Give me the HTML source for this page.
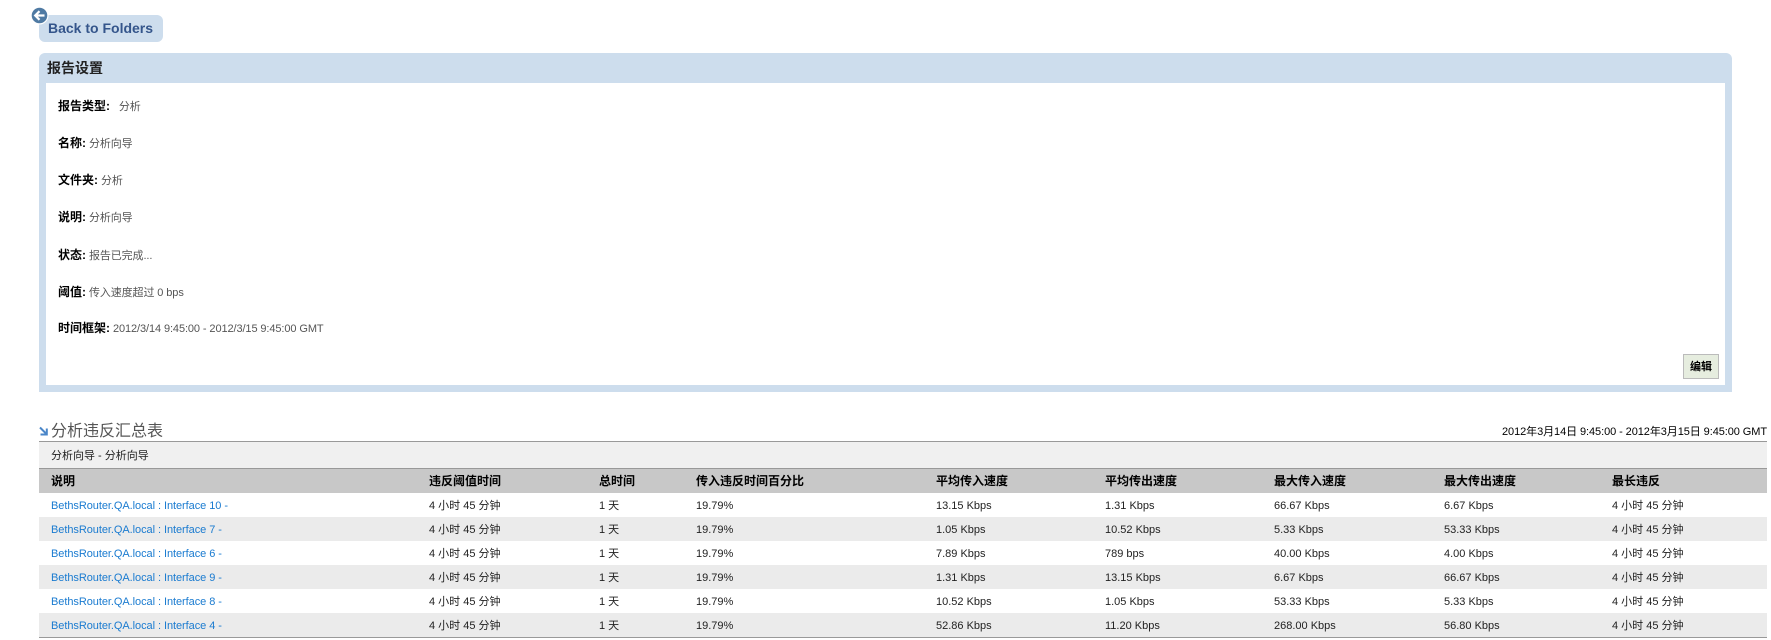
<!DOCTYPE html>
<html lang="zh"><head><meta charset="utf-8"><title>分析违反汇总表</title>
<style>
html,body{margin:0;padding:0;width:1771px;height:640px;overflow:hidden}
html{background:#fff}
body{position:relative;font-family:"Liberation Sans","WenQuanYi Zen Hei","Noto Sans CJK SC",sans-serif;font-size:11px;color:#555}
.a{position:absolute;white-space:nowrap}
.back{left:39px;top:15px;width:124px;height:27px;background:#cddded;border-radius:6px;color:#34558b;font-weight:bold;font-size:14px;line-height:27px;text-indent:9px}
.panel{left:39px;top:53px;width:1693px;height:339px;background:#cddded;border-radius:6px 6px 0 0}
.panel h2{position:absolute;left:8px;top:0;margin:0;font-size:14px;line-height:30px;color:#222;font-weight:bold}
.inner{position:absolute;left:7px;top:30px;width:1679px;height:302px;background:#fff}
.l{left:58px;line-height:14px;height:14px;letter-spacing:-.1px}
.l b{color:#000;font-size:12px;letter-spacing:0}
.edit{left:1683px;top:354px;width:34px;height:23px;background:#e6eddf;border:1px solid #bbb;color:#000;font-weight:bold;font-size:11px;line-height:24px;text-align:center}
.title{left:51px;top:422px;font-size:16px;line-height:20px;color:#555}
.range{right:4px;top:425px;color:#000;font-size:11px;line-height:14px;letter-spacing:-.08px}
table{position:absolute;left:39px;top:441px;width:1728px;border-collapse:collapse;table-layout:fixed;border-bottom:1px solid #999;border-top:1px solid #999;color:#222;font-size:11px}
td,th{padding:0 0 0 12px;text-align:left;white-space:nowrap;overflow:hidden;line-height:14px}
tr.s td{background:#f0f0f0;height:25px;padding-top:1px;border-bottom:1px solid #999;color:#222}
th{background:#c8c8c8;height:24px;color:#000;font-weight:bold;font-size:12px}
tbody td{height:23px;padding-top:1px}
tr.e td{background:#ebebeb}
a{color:#1a7bd0;text-decoration:none;letter-spacing:-.06px}
</style></head><body>
<div class="a back">Back to Folders</div>
<svg class="a" style="left:30px;top:6px" width="19" height="19" viewBox="0 0 19 19"><circle cx="9.5" cy="9.5" r="9" fill="#fff"/><circle cx="9.5" cy="9.5" r="7.8" fill="#4f7aa3"/><path d="M14.5 9.5H5.5M9.5 5.2L5.2 9.5L9.5 13.8" fill="none" stroke="#fff" stroke-width="2.2"/></svg>
<div class="a panel"><h2>报告设置</h2><div class="inner"></div></div>
<div class="a l" style="top:99px"><b>报告类型:</b>&nbsp;&nbsp; 分析</div>
<div class="a l" style="top:136px"><b>名称:</b> 分析向导</div>
<div class="a l" style="top:173px"><b>文件夹:</b> 分析</div>
<div class="a l" style="top:210px"><b>说明:</b> 分析向导</div>
<div class="a l" style="top:248px"><b>状态:</b> 报告已完成...</div>
<div class="a l" style="top:285px"><b>阈值:</b> 传入速度超过 0 bps</div>
<div class="a l" style="top:321px"><b>时间框架:</b> 2012/3/14 9:45:00 - 2012/3/15 9:45:00 GMT</div>
<div class="a edit">编辑</div>
<svg class="a" style="left:39px;top:426px" width="9" height="10" viewBox="0 0 9 10"><path d="M1 1.5L7 7.5M7.8 2.5V8.5H1.5" fill="none" stroke="#4a86c8" stroke-width="2"/></svg>
<div class="a title">分析违反汇总表</div>
<div class="a range">2012年3月14日 9:45:00 - 2012年3月15日 9:45:00 GMT</div>
<table>
<colgroup><col style="width:378px"><col style="width:170px"><col style="width:97px"><col style="width:240px"><col style="width:169px"><col style="width:169px"><col style="width:170px"><col style="width:168px"><col style="width:167px"></colgroup>
<thead><tr class="s"><td colspan="9">分析向导 - 分析向导</td></tr>
<tr><th>说明</th><th>违反阈值时间</th><th>总时间</th><th>传入违反时间百分比</th><th>平均传入速度</th><th>平均传出速度</th><th>最大传入速度</th><th>最大传出速度</th><th>最长违反</th></tr></thead>
<tbody>
<tr><td><a href="#">BethsRouter.QA.local : Interface 10 -</a></td><td>4 小时 45 分钟</td><td>1 天</td><td>19.79%</td><td>13.15 Kbps</td><td>1.31 Kbps</td><td>66.67 Kbps</td><td>6.67 Kbps</td><td>4 小时 45 分钟</td></tr>
<tr class="e"><td><a href="#">BethsRouter.QA.local : Interface 7 -</a></td><td>4 小时 45 分钟</td><td>1 天</td><td>19.79%</td><td>1.05 Kbps</td><td>10.52 Kbps</td><td>5.33 Kbps</td><td>53.33 Kbps</td><td>4 小时 45 分钟</td></tr>
<tr><td><a href="#">BethsRouter.QA.local : Interface 6 -</a></td><td>4 小时 45 分钟</td><td>1 天</td><td>19.79%</td><td>7.89 Kbps</td><td>789 bps</td><td>40.00 Kbps</td><td>4.00 Kbps</td><td>4 小时 45 分钟</td></tr>
<tr class="e"><td><a href="#">BethsRouter.QA.local : Interface 9 -</a></td><td>4 小时 45 分钟</td><td>1 天</td><td>19.79%</td><td>1.31 Kbps</td><td>13.15 Kbps</td><td>6.67 Kbps</td><td>66.67 Kbps</td><td>4 小时 45 分钟</td></tr>
<tr><td><a href="#">BethsRouter.QA.local : Interface 8 -</a></td><td>4 小时 45 分钟</td><td>1 天</td><td>19.79%</td><td>10.52 Kbps</td><td>1.05 Kbps</td><td>53.33 Kbps</td><td>5.33 Kbps</td><td>4 小时 45 分钟</td></tr>
<tr class="e"><td><a href="#">BethsRouter.QA.local : Interface 4 -</a></td><td>4 小时 45 分钟</td><td>1 天</td><td>19.79%</td><td>52.86 Kbps</td><td>11.20 Kbps</td><td>268.00 Kbps</td><td>56.80 Kbps</td><td>4 小时 45 分钟</td></tr>
</tbody></table>
</body></html>
